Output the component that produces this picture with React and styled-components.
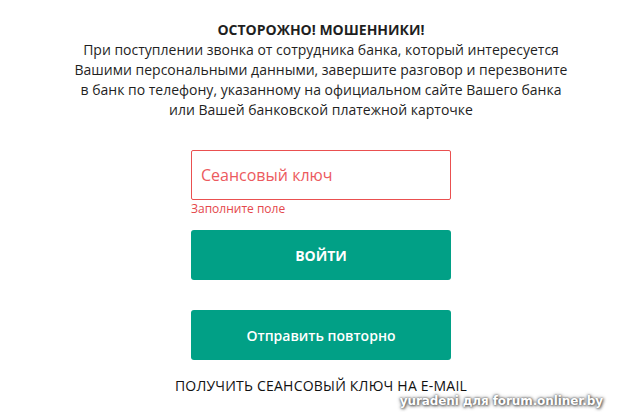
import React from "react";
import styled, { createGlobalStyle } from "styled-components";

const Global = createGlobalStyle`
  html, body { margin: 0; padding: 0; background: #fff; }
  body { font-family: "Open Sans", "Liberation Sans", sans-serif; color: #1a1a1a; }
  * { box-sizing: border-box; }
`;

const Page = styled.div`
  position: relative;
  width: 626px;
  height: 419px;
  overflow: hidden;
  padding: 20px 0 0 16px;
  display: flex;
  flex-direction: column;
  align-items: center;
`;

const Warning = styled.div`
  text-align: center;
  font-size: 14px;
  line-height: 20px;
  color: #1f1f1f;
`;

const Title = styled.div`
  font-weight: 700;
`;

const Form = styled.form`
  width: 260px;
  margin-top: 30px;
  display: flex;
  flex-direction: column;
`;

const Input = styled.input`
  width: 100%;
  height: 50px;
  border: 1px solid #ea5050;
  border-radius: 2px;
  padding: 0 9px;
  font-family: "Open Sans", sans-serif;
  font-size: 16px;
  outline: none;
  &::placeholder { color: #ec5a5e; opacity: 1; }
`;

const Error = styled.div`
  font-size: 12px;
  line-height: 16px;
  height: 30px;
  padding-top: 1px;
  color: #e4474b;
`;

const Button = styled.button`
  width: 100%;
  height: 50px;
  border: none;
  border-radius: 3px;
  background: #01a086;
  color: #fff;
  font-family: "Open Sans", sans-serif;
  font-size: 14px;
  font-weight: ${(p) => (p.$bold ? 700 : 600)};
  margin-bottom: ${(p) => p.$gap || 0}px;
  cursor: pointer;
`;

const EmailLink = styled.div`
  margin-top: 16px;
  font-size: 14px;
  line-height: 20px;
  letter-spacing: 0.22px;
  color: #111;
  text-align: center;
  white-space: nowrap;
`;

const Watermark = styled.div`
  position: absolute;
  right: 23px;
  bottom: 11px;
  font-family: "DejaVu Sans", sans-serif;
  font-weight: 700;
  font-size: 12px;
  letter-spacing: -0.1px;
  color: #fff;
  text-shadow: 0 0 2px #555, 1px 1px 3px #666, 0 0 4px #888;
`;

export default function App() {
  return (
    <>
      <Global />
      <Page>
        <Warning>
          <Title>ОСТОРОЖНО! МОШЕННИКИ!</Title>
          При поступлении звонка от сотрудника банка, который интересуется
          <br />
          Вашими персональными данными, завершите разговор и перезвоните
          <br />
          в банк по телефону, указанному на официальном сайте Вашего банка
          <br />
          или Вашей банковской платежной карточке
        </Warning>
        <Form onSubmit={(e) => e.preventDefault()}>
          <Input placeholder="Сеансовый ключ" />
          <Error>Заполните поле</Error>
          <Button $bold $gap={30}>ВОЙТИ</Button>
          <Button>Отправить повторно</Button>
        </Form>
        <EmailLink>ПОЛУЧИТЬ СЕАНСОВЫЙ КЛЮЧ НА E-MAIL</EmailLink>
        <Watermark>yuradeni для forum.onliner.by</Watermark>
      </Page>
    </>
  );
}
